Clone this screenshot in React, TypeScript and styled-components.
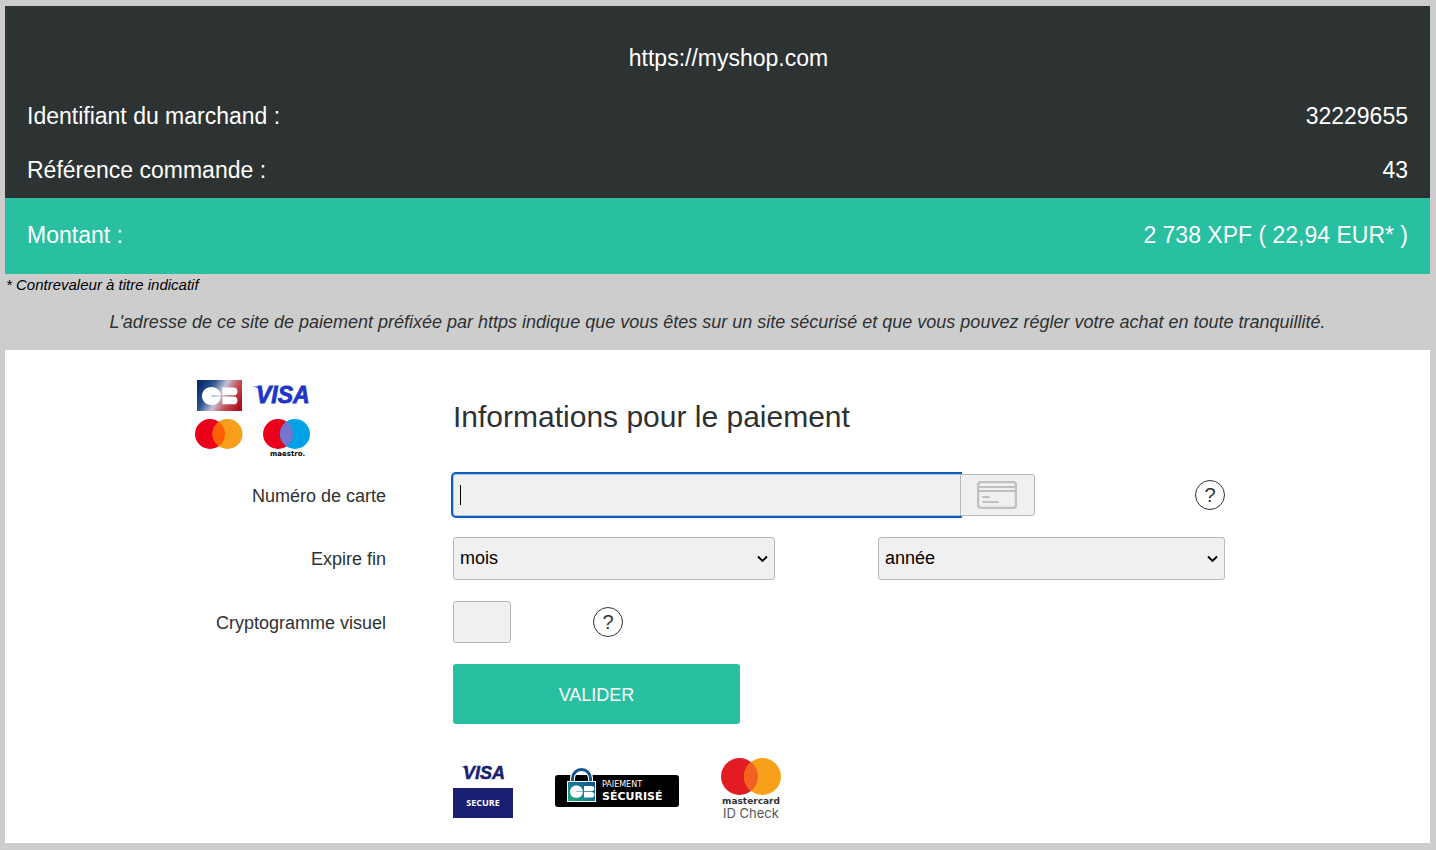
import React from "react";
import styled, { createGlobalStyle } from "styled-components";

const GlobalStyle = createGlobalStyle`
  *, *::before, *::after { box-sizing: border-box; }
  body {
    margin: 0;
    background: #cdcdcd;
    color: #2d3132;
    font-family: "Liberation Sans", Arial, sans-serif;
    font-size: 18px;
  }
`;

const Page = styled.main`
  padding: 6px 6px 7px 5px;
`;

const Summary = styled.header`
  background: #2d3333;
  color: #fff;
  font-size: 23px;
`;

const ShopName = styled.h1`
  margin: 0;
  padding: 38px 0 17px 22px;
  font-size: 23px;
  font-weight: 400;
  line-height: 28px;
  text-align: center;
`;

const SummaryList = styled.dl`
  margin: 0;
`;

const SummaryRow = styled.div<{ $highlight?: boolean }>`
  display: flex;
  justify-content: space-between;
  padding: ${(p) => (p.$highlight ? "10px 22px 12px" : "0 22px")};
  line-height: 54px;
  background: ${(p) => (p.$highlight ? "#28c0a1" : "transparent")};
  margin-top: ${(p) => (p.$highlight ? "1px" : "0")};

  dt, dd { margin: 0; }
`;

const Footnote = styled.p`
  margin: 0;
  padding: 0 1px;
  color: #000;
  font-size: 15px;
  font-style: italic;
  line-height: 22px;
`;

const Notice = styled.p`
  margin: 0;
  padding: 14px 0 16px;
  font-style: italic;
  line-height: 24px;
  text-align: center;
`;

const Panel = styled.form`
  display: grid;
  grid-template-columns: 191px minmax(0, 1fr);
  column-gap: 67px;
  row-gap: 21px;
  align-items: center;
  padding: 30px 205px 24px 190px;
  background: #fff;
`;

const Brands = styled.div`
  display: grid;
  grid-template-columns: 48px 57px;
  grid-template-rows: 31px 38px;
  gap: 8px 10px;
  justify-items: end;
  margin-bottom: -4px;

  svg { display: block; overflow: visible; }
`;

const Title = styled.h2`
  margin: 0;
  font-size: 30px;
  font-weight: 400;
  line-height: 36px;
`;

const Label = styled.label`
  padding-top: 1px;
  line-height: 22px;
  text-align: right;
`;

const Line = styled.div`
  display: flex;
  align-items: center;
`;

const fieldBox = `
  height: 42px;
  margin: 0;
  border: 1px solid #b9b9b9;
  border-radius: 3px;
  background: #f0f0f0;
  color: #000;
  font-family: inherit;
  font-size: 18px;
`;

const NumberField = styled.div`
  position: relative;
  flex: 1;
  margin-right: 160px;
  display: flex;

  &::before {
    content: "";
    position: absolute;
    left: 7px;
    top: 11px;
    width: 1px;
    height: 20px;
    background: #000;
  }
`;

const NumberInput = styled.input`
  ${fieldBox}
  flex: 1;
  min-width: 0;
  padding: 0 6px;
  border-color: #a8c4f0;
  border-right: 0;
  border-radius: 3px 0 0 3px;
  outline: none;
  box-shadow: 0 0 0 2px #105bbe;
  caret-color: transparent;
`;

const CardAddon = styled.span`
  ${fieldBox}
  position: relative;
  display: flex;
  align-items: center;
  padding-left: 16px;
  width: 75px;
  border-radius: 0 3px 3px 0;
`;

const DateLine = styled.div`
  display: grid;
  grid-template-columns: 322fr 347fr;
  column-gap: 103px;
`;

const SelectBox = styled.div`
  position: relative;

  svg {
    position: absolute;
    right: 7px;
    top: 18px;
    pointer-events: none;
  }
`;

const Select = styled.select`
  ${fieldBox}
  display: block;
  appearance: none;
  height: 43px;
  width: 100%;
  padding: 0 24px 2px 6px;
`;

const CodeInput = styled.input`
  ${fieldBox}
  width: 58px;
  margin-right: 82px;
  padding: 0 6px;
`;

const HelpButton = styled.button`
  width: 30px;
  height: 30px;
  padding: 0;
  border: 1px solid #333;
  border-radius: 50%;
  background: #fff;
  color: #333;
  font-family: inherit;
  font-size: 20px;
  line-height: 28px;
`;

const Submit = styled.button`
  width: 287px;
  height: 60px;
  padding: 2px 0 0;
  border: 0;
  border-radius: 3px;
  background: #28c0a1;
  color: #fff;
  font-family: inherit;
  font-size: 18px;
`;

const Trust = styled.div`
  display: flex;
  gap: 42px;
  padding-top: 12px;

  svg { display: block; overflow: visible; }
`;

const CbMark = ({ x, y, scale }: { x: number; y: number; scale: number }) => (
  <g transform={`translate(${x} ${y}) scale(${scale})`}>
    <path
      fill="#fff"
      d="M18.500 8.400H9.200v.8H18.500C18.300 14 14.400 17.600 9.200 17.600 4 17.600 0 13.800 0 8.800S4 0 9.200 0c5.200 0 9.100 3.500 9.300 8.400z"
    />
    <path fill="#fff" d="M20 .6H30.900a3.800 3.800 0 0 1 0 7.600H20zM20 9.400H30.900a3.800 3.800 0 0 1 0 7.600H20z" />
  </g>
);

const CbLogo = () => (
  <svg width="46" height="31" viewBox="0 0 46 31" role="img" aria-label="CB">
    <defs>
      <linearGradient id="cb" x1="0" y1="0.300" x2="1" y2="0.700">
        <stop offset="0" stopColor="#0b2d6b" />
        <stop offset="0.250" stopColor="#2c5390" />
        <stop offset="0.500" stopColor="#c3c3d6" />
        <stop offset="0.720" stopColor="#c7545c" />
        <stop offset="1" stopColor="#ab1220" />
      </linearGradient>
    </defs>
    <rect width="45" height="31" fill="url(#cb)" />
    <CbMark x={5} y={7} scale={1.02} />
  </svg>
);

const VisaLogo = () => (
  <svg width="57" height="31" viewBox="0 0 57 31" role="img" aria-label="Visa">
    <path d="M0 6.500h8l2 6C8 9 4 7.500 0 6.500z" fill="#1f35c7" />
    <text x="3" y="23" fill="#1f35c7" stroke="#1f35c7" strokeWidth="0.800" fontFamily="Liberation Sans, sans-serif" fontSize="23" fontWeight="700" fontStyle="italic">VISA</text>
  </svg>
);

const MastercardLogo = () => (
  <svg width="48" height="38" viewBox="0 0 48 38" role="img" aria-label="Mastercard">
    <circle cx="15" cy="15" r="15" fill="#eb001b" />
    <circle cx="32.500" cy="15" r="15" fill="#f79e1b" />
    <path d="M23.750 2.800a15 15 0 0 1 0 24.400 15 15 0 0 1 0-24.400z" fill="#ff5f00" />
  </svg>
);

const MaestroLogo = () => (
  <svg width="47" height="38" viewBox="0 0 47 38" role="img" aria-label="Maestro">
    <circle cx="15" cy="15" r="15" fill="#eb001b" />
    <circle cx="32" cy="15" r="15" fill="#00a2e5" />
    <path d="M23.500 2.600a15 15 0 0 1 0 24.800 15 15 0 0 1 0-24.800z" fill="#7375cf" />
    <text x="7" y="37" fill="#000" fontFamily="DejaVu Sans, sans-serif" fontSize="7" fontWeight="700">maestro.</text>
  </svg>
);

const CardIcon = () => (
  <svg width="40" height="28" viewBox="0 0 40 28" fill="none" stroke="#c0c0c0" strokeWidth="2" aria-hidden="true">
    <rect x="1" y="1" width="38" height="26" rx="3" strokeWidth="2.500" />
    <path d="M1 6h38M1 10h38" />
    <path d="M6 16h6M6 21h15" strokeLinecap="round" />
  </svg>
);

const Chevron = () => (
  <svg width="11" height="8" viewBox="0 0 11 8" fill="none" stroke="#000" strokeWidth="1.800" aria-hidden="true">
    <path d="M1 1.500l4.500 4.500L10 1.500" />
  </svg>
);

const VisaSecure = () => (
  <svg width="60" height="62" viewBox="0 0 60 62" role="img" aria-label="Visa Secure">
    <path d="M8 9.500h6l1 5c-2-2.500-4-4-7-5z" fill="#1a1f71" />
    <text x="10" y="22" fill="#1a1f71" stroke="#1a1f71" strokeWidth="0.500" fontFamily="Liberation Sans, sans-serif" fontSize="18" fontWeight="700" fontStyle="italic">VISA</text>
    <rect y="31" width="60" height="30" fill="#1a1f71" />
    <text x="30" y="49" fill="#fff" textAnchor="middle" fontFamily="Open Sans, sans-serif" fontSize="9" fontWeight="700">SECURE</text>
  </svg>
);

const SecurePayment = () => (
  <svg width="124" height="62" viewBox="0 0 124 62" role="img" aria-label="Paiement sécurisé">
    <defs>
      <linearGradient id="lock" x1="1" y1="0" x2="0" y2="1">
        <stop offset="0" stopColor="#0b4f8c" />
        <stop offset="0.500" stopColor="#16799a" />
        <stop offset="1" stopColor="#1fae6c" />
      </linearGradient>
    </defs>
    <rect y="18" width="124" height="32" rx="3" fill="#000" />
    <path d="M17.500 25v-3.500a9 9 0 0 1 18 0V25" fill="none" stroke="#fff" strokeWidth="5" />
    <path d="M17.500 25v-3.500a9 9 0 0 1 18 0V25" fill="none" stroke="#12558c" strokeWidth="3" />
    <rect x="12.500" y="24.500" width="28" height="20" fill="url(#lock)" stroke="#fff" />
    <CbMark x={15} y={28.500} scale={0.7} />
    <text x="47" y="30" fill="#fff" fontFamily="DejaVu Sans, sans-serif" fontSize="8">PAIEMENT</text>
    <text x="47" y="43" fill="#fff" fontFamily="DejaVu Sans, sans-serif" fontSize="11" fontWeight="700">SÉCURISÉ</text>
  </svg>
);

const MastercardCheck = () => (
  <svg width="62" height="62" viewBox="0 0 62 62" role="img" aria-label="Mastercard ID Check">
    <circle cx="18.500" cy="19.500" r="18.500" fill="#e31b23" />
    <circle cx="41.500" cy="19.500" r="18.500" fill="#f9a01b" />
    <path d="M30 5a18.500 18.500 0 0 1 0 29 18.500 18.500 0 0 1 0-29z" fill="#f26122" />
    <text x="30" y="47" textAnchor="middle" fill="#333" fontFamily="DejaVu Sans, sans-serif" fontSize="9" fontWeight="700">mastercard</text>
    <text x="30" y="61" textAnchor="middle" fill="#555" fontFamily="Inter, sans-serif" fontSize="13" fontWeight="400">ID Check</text>
  </svg>
);

export default function App() {
  return (
    <>
      <GlobalStyle />
      <Page>
        <Summary>
          <ShopName>https://myshop.com</ShopName>
          <SummaryList>
            <SummaryRow>
              <dt>Identifiant du marchand :</dt>
              <dd>32229655</dd>
            </SummaryRow>
            <SummaryRow>
              <dt>Référence commande :</dt>
              <dd>43</dd>
            </SummaryRow>
            <SummaryRow $highlight>
              <dt>Montant :</dt>
              <dd>2 738 XPF ( 22,94 EUR* )</dd>
            </SummaryRow>
          </SummaryList>
        </Summary>
        <Footnote>* Contrevaleur à titre indicatif</Footnote>
        <Notice>
          L'adresse de ce site de paiement préfixée par https indique que vous êtes sur un site sécurisé et que vous
          pouvez régler votre achat en toute tranquillité.
        </Notice>
        <Panel onSubmit={(e) => e.preventDefault()}>
          <Brands>
            <CbLogo />
            <VisaLogo />
            <MastercardLogo />
            <MaestroLogo />
          </Brands>
          <Title>Informations pour le paiement</Title>

          <Label htmlFor="number">Numéro de carte</Label>
          <Line>
            <NumberField>
              <NumberInput id="number" inputMode="numeric" autoComplete="cc-number" />
              <CardAddon>
                <CardIcon />
              </CardAddon>
            </NumberField>
            <HelpButton type="button" aria-label="Aide sur le numéro de carte">?</HelpButton>
          </Line>

          <Label htmlFor="month">Expire fin</Label>
          <DateLine>
            <SelectBox>
              <Select id="month">
                <option>mois</option>
              </Select>
              <Chevron />
            </SelectBox>
            <SelectBox>
              <Select aria-label="Année d'expiration">
                <option>année</option>
              </Select>
              <Chevron />
            </SelectBox>
          </DateLine>

          <Label htmlFor="code">Cryptogramme visuel</Label>
          <Line>
            <CodeInput id="code" inputMode="numeric" maxLength={3} />
            <HelpButton type="button" aria-label="Aide sur le cryptogramme">?</HelpButton>
          </Line>

          <span />
          <Submit type="submit">VALIDER</Submit>

          <span />
          <Trust>
            <VisaSecure />
            <SecurePayment />
            <MastercardCheck />
          </Trust>
        </Panel>
      </Page>
    </>
  );
}
